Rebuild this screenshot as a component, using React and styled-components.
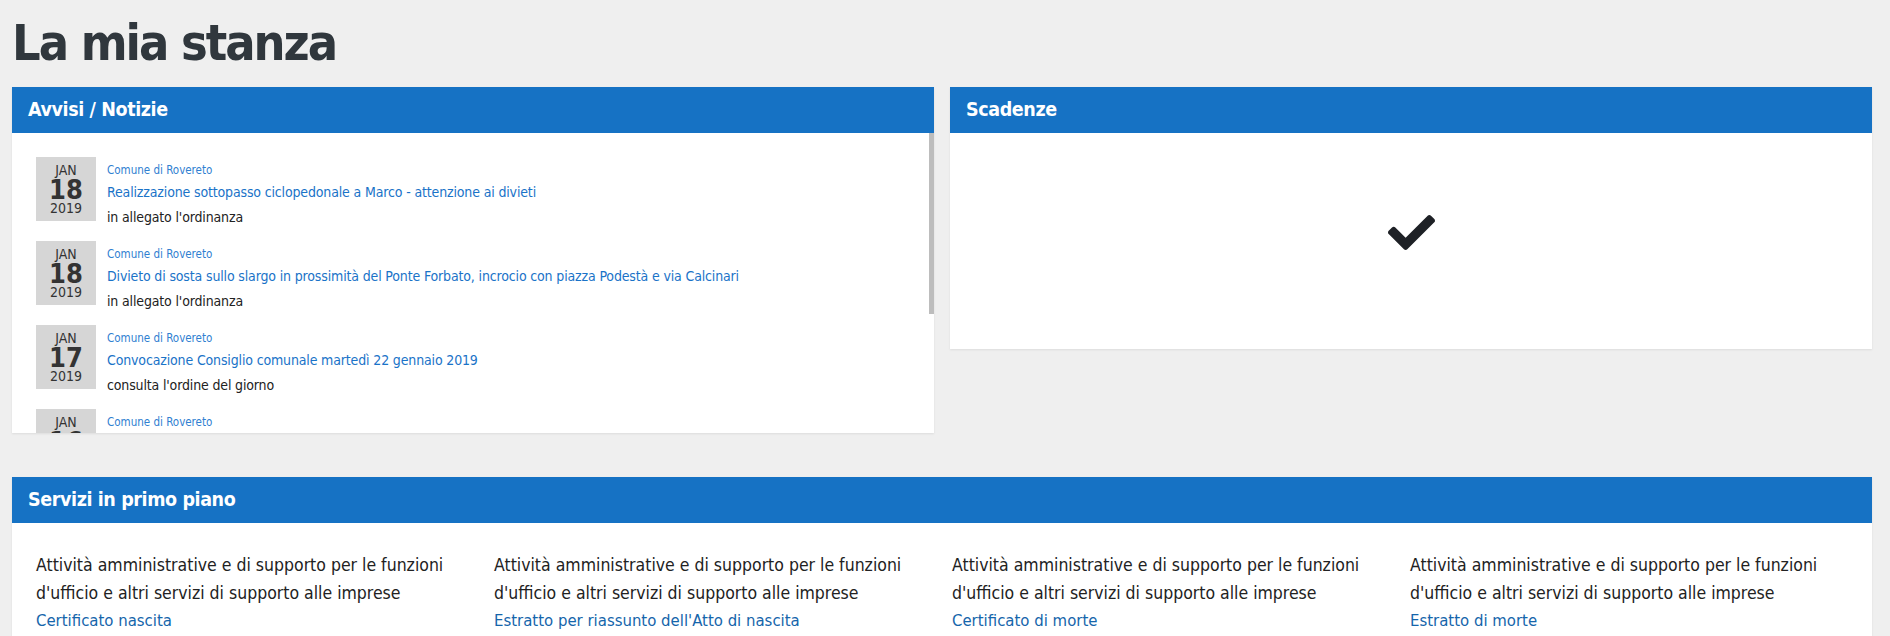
import React from "react"
import styled, { createGlobalStyle } from "styled-components"
import { FaCheck } from "react-icons/fa"

const GlobalStyle = createGlobalStyle`
  html, body {
    margin: 0;
    padding: 0;
    background: #efefef;
  }
  body {
    font-family: "DejaVu Sans Condensed", "Liberation Sans", sans-serif;
    color: #222;
  }
`

const Page = styled.div`
  width: 1860px;
  padding: 0 0 0 12px;
`

const Title = styled.h1`
  margin: 11px 0 11px 0;
  font-size: 50px;
  line-height: 65px;
  font-weight: 700;
  letter-spacing: -2px;
  color: #30373d;
`

const TopRow = styled.div`
  display: grid;
  grid-template-columns: 922px 922px;
  column-gap: 16px;
  align-items: start;
`

const Panel = styled.section`
  background: #fff;
  box-shadow: 0 1px 2px rgba(0, 0, 0, 0.08);
  margin-top: ${props => props.spaced ? "44px" : "0"};
`

const PanelHeader = styled.h2`
  margin: 0;
  height: 46px;
  padding: 0 16px;
  background: #1672c4;
  color: #fff;
  font-size: 19.5px;
  letter-spacing: -0.4px;
  line-height: 46px;
  font-weight: 700;
`

const NewsBody = styled.div`
  height: 300px;
  display: flex;
`

const NewsList = styled.div`
  flex: 1;
  overflow: hidden;
  padding: 24px 0 0 24px;
`

/* the list scrolls in the original; thumb drawn so it shows in a still shot */
const ScrollThumb = styled.div`
  flex: none;
  width: 5px;
  height: 181px;
  background: #bdbdbd;
`

const NewsItem = styled.div`
  display: flex;
  align-items: flex-start;
  gap: 11px;
  height: 64px;
  margin-bottom: 20px;
`

const DateBox = styled.div`
  flex: none;
  width: 60px;
  height: 64px;
  padding-top: 6px;
  box-sizing: border-box;
  background: #d6d6d6;
  color: #333;
  display: flex;
  flex-direction: column;
  align-items: center;
`

const Month = styled.span`
  font-size: 14px;
  line-height: 14px;
`

const Day = styled.span`
  font-size: 27px;
  line-height: 26px;
  font-weight: 700;
`

const Year = styled.span`
  font-size: 14px;
  line-height: 10px;
`

const NewsText = styled.div`
  display: flex;
  flex-direction: column;
  padding-top: 4px;
`

const Source = styled.a`
  font-size: 11.5px;
  line-height: 18px;
  color: #2f80d1;
  text-decoration: none;
`

const NewsLink = styled.a`
  font-size: 14px;
  line-height: 26px;
  letter-spacing: -0.15px;
  color: #1a73c8;
  text-decoration: none;
`

const NewsNote = styled.span`
  font-size: 14px;
  line-height: 25px;
  letter-spacing: -0.15px;
  color: #222;
`

const DeadlineBody = styled.div`
  height: 216px;
  display: flex;
  align-items: center;
  justify-content: center;
  padding-bottom: 17px;
  box-sizing: border-box;
  color: #1e2126;
`

const ServicesBody = styled.div`
  display: grid;
  grid-template-columns: repeat(4, 458px);
  padding: 28px 0 0 24px;
  height: 120px;
`

const Service = styled.div`
  line-height: 28px;
  padding-right: 20px;
`

const ServiceDesc = styled.div`
  font-size: 17.5px;
  color: #222;
`

const ServiceLink = styled.a`
  font-size: 16.6px;
  color: #1565ab;
  text-decoration: none;
`

const news = [
  { month: "JAN", day: "18", year: "2019", title: "Realizzazione sottopasso ciclopedonale a Marco - attenzione ai divieti", note: "in allegato l'ordinanza" },
  { month: "JAN", day: "18", year: "2019", title: "Divieto di sosta sullo slargo in prossimità del Ponte Forbato, incrocio con piazza Podestà e via Calcinari", note: "in allegato l'ordinanza" },
  { month: "JAN", day: "17", year: "2019", title: "Convocazione Consiglio comunale martedì 22 gennaio 2019", note: "consulta l'ordine del giorno" },
  { month: "JAN", day: "16", year: "2019", title: "Chiusura temporanea di via Dante per lavori", note: "in allegato l'ordinanza" },
  { month: "JAN", day: "15", year: "2019", title: "Avviso pubblico per la concessione di contributi", note: "consulta il bando" },
]

const services = [
  "Certificato nascita",
  "Estratto per riassunto dell'Atto di nascita",
  "Certificato di morte",
  "Estratto di morte",
]

const App = () => {
  return (
    <>
      <GlobalStyle />
      <Page>
        <Title>La mia stanza</Title>
        <TopRow>
          <Panel>
            <PanelHeader>Avvisi / Notizie</PanelHeader>
            <NewsBody>
              <NewsList>
                {news.map((n, i) => (
                  <NewsItem key={i}>
                    <DateBox>
                      <Month>{n.month}</Month>
                      <Day>{n.day}</Day>
                      <Year>{n.year}</Year>
                    </DateBox>
                    <NewsText>
                      <Source href="#">Comune di Rovereto</Source>
                      <NewsLink href="#">{n.title}</NewsLink>
                      <NewsNote>{n.note}</NewsNote>
                    </NewsText>
                  </NewsItem>
                ))}
              </NewsList>
              <ScrollThumb />
            </NewsBody>
          </Panel>
          <Panel>
            <PanelHeader>Scadenze</PanelHeader>
            <DeadlineBody>
              <FaCheck size={47} />
            </DeadlineBody>
          </Panel>
        </TopRow>
        <Panel spaced>
          <PanelHeader>Servizi in primo piano</PanelHeader>
          <ServicesBody>
            {services.map((s, i) => (
              <Service key={i}>
                <ServiceDesc>Attività amministrative e di supporto per le funzioni d'ufficio e altri servizi di supporto alle imprese</ServiceDesc>
                <ServiceLink href="#">{s}</ServiceLink>
              </Service>
            ))}
          </ServicesBody>
        </Panel>
      </Page>
    </>
  )
}

export default App
